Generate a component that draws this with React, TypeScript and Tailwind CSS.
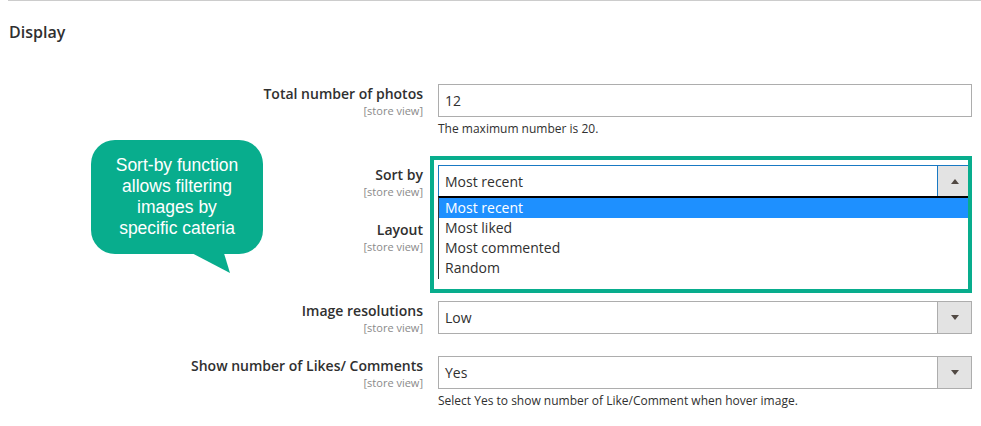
import React from 'react';

const GREEN = '#08ad8d';

const Caret = ({ up = false }: { up?: boolean }) => (
  <svg width="8" height="5" viewBox="0 0 8 5" className="block">
    {up ? <polygon points="0,5 8,5 4,0" fill="#514943" /> : <polygon points="0,0 8,0 4,5" fill="#514943" />}
  </svg>
);

interface SelectProps {
  value: string;
  open?: boolean;
}

const Select: React.FC<SelectProps> = ({ value, open = false }) => (
  <div
    className={`flex h-[33px] bg-white border ${open ? 'border-[#1979c3]' : 'border-[#adadad]'}`}
  >
    <div className="flex-1 flex items-center px-[6px] text-[14px] leading-[20px] text-[#303030]">{value}</div>
    <div
      className={`w-[34px] flex items-center justify-center bg-[#e3e3e3] border-l ${
        open ? 'border-[#1979c3]' : 'border-[#adadad]'
      }`}
    >
      <Caret up={open} />
    </div>
  </div>
);

interface RowProps {
  label: string;
  className?: string;
  children: React.ReactNode;
}

const Row: React.FC<RowProps> = ({ label, className = '', children }) => (
  <div className={`flex items-start ${className}`}>
    <div className="w-[423px] shrink-0 text-right pt-[1px]">
      <div className="text-[14px] leading-[20px] font-semibold text-[#303030]">{label}</div>
      <div className="text-[11px] leading-[13px] text-[#8a8a8a]">[store view]</div>
    </div>
    <div className="ml-[15px] w-[534px] pt-[1px]">{children}</div>
  </div>
);

const options = ['Most recent', 'Most liked', 'Most commented', 'Random'];

export default function App() {
  return (
    <div className="relative w-[981px] h-[426px] bg-white overflow-hidden font-['Open_Sans',sans-serif] text-[#303030]">
      <div className="ml-2 h-px bg-[#cccccc]" />
      <h2 className="mt-[20px] pl-[9px] text-[16px] leading-[22px] font-semibold text-[#303030]">Display</h2>

      <Row label="Total number of photos" className="mt-[40px]">
        <div className="h-[33px] border border-[#adadad] flex items-center px-[6px] text-[14px] leading-[20px]">12</div>
        <div className="mt-[4px] text-[12px] leading-[16px]">The maximum number is 20.</div>
      </Row>

      <Row label="Sort by" className="mt-[27px]">
        <Select value="Most recent" open />
      </Row>

      <Row label="Layout" className="mt-[21px]">
        <Select value="" />
      </Row>

      <Row label="Image resolutions" className="mt-[47px]">
        <Select value="Low" />
      </Row>

      <Row label="Show number of Likes/ Comments" className="mt-[21px]">
        <Select value="Yes" />
        <div className="mt-[4px] text-[12px] leading-[16px]">
          Select Yes to show number of Like/Comment when hover image.
        </div>
      </Row>

      {/* open dropdown list of Sort by */}
      <div className="absolute left-[438px] top-[196px] w-[530px] h-[83px] bg-white border-t-2 border-l border-t-black border-l-[#333]">
        {options.map((o, i) => (
          <div
            key={o}
            className={`h-[20px] pl-[6px] text-[14px] leading-[20px] ${
              i === 0 ? 'bg-[#1e90ff] text-white' : 'text-[#303030]'
            }`}
          >
            {o}
          </div>
        ))}
      </div>

      {/* highlight frame */}
      <div
        className="absolute left-[430px] top-[156px] w-[542px] h-[137px] border-4"
        style={{ borderColor: GREEN }}
      />

      {/* callout bubble */}
      <svg className="absolute left-0 top-0" width="300" height="300" viewBox="0 0 300 300">
        <polygon points="186,250 223,250 230,273" fill={GREEN} />
      </svg>
      <div
        className="absolute left-[91px] top-[140px] w-[172px] h-[114px] rounded-[24px] flex items-center justify-center text-center text-white text-[17.5px] leading-[21px] font-['Liberation_Sans',Arial,sans-serif]"
        style={{ backgroundColor: GREEN }}
      >
        <div>
          Sort-by function
          <br />
          allows filtering
          <br />
          images by
          <br />
          specific cateria
        </div>
      </div>
    </div>
  );
}
